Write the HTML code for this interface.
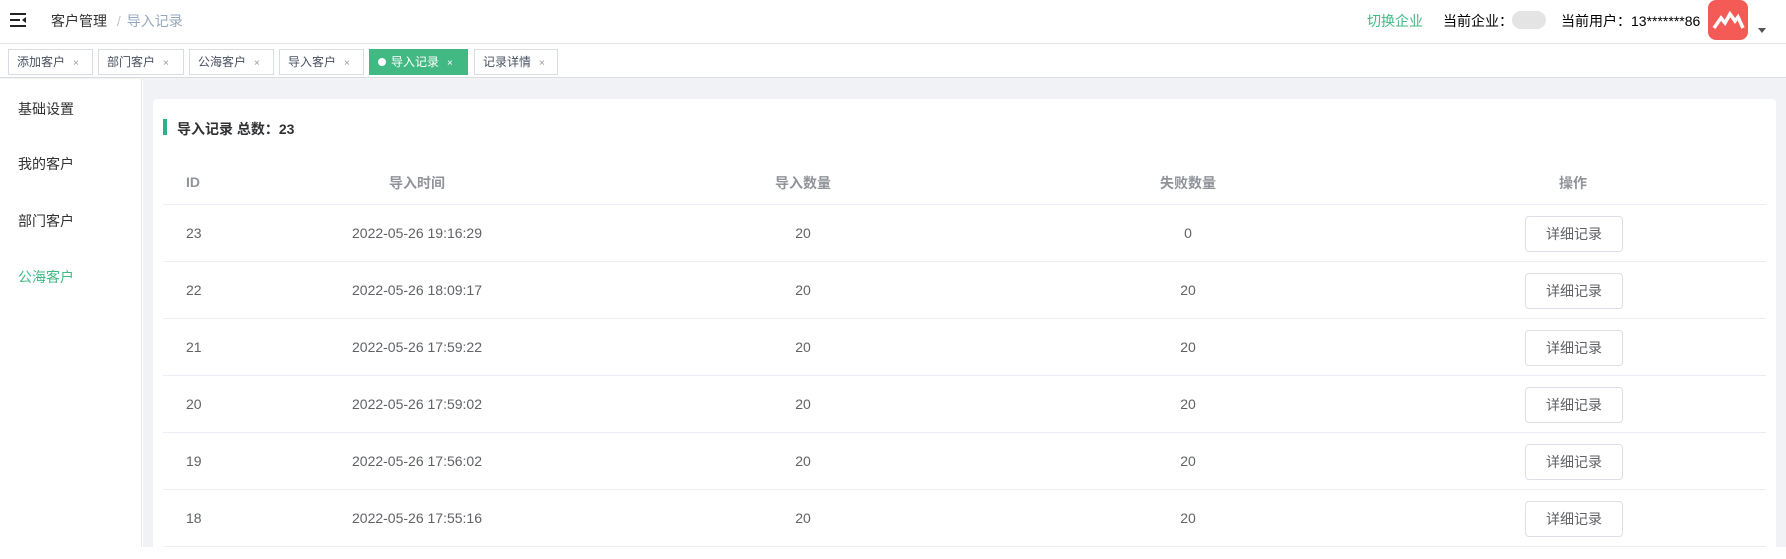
<!DOCTYPE html>
<html><head><meta charset="utf-8"><style>
*{box-sizing:border-box;margin:0;padding:0}
body{width:1786px;height:547px;overflow:hidden;background:#fff;font-family:"Liberation Sans","Noto Sans CJK SC",sans-serif;font-size:14px;color:#303133;position:relative}
.a{position:absolute;white-space:nowrap}
.tab{position:absolute;top:49px;height:26px;border:1px solid #d8dce5;font-size:12px;color:#495060;line-height:24px;padding-left:8px;background:#fff}
.tab i{font-style:normal;color:#999;font-size:10px;margin-left:8px}
.row{position:absolute;left:163px;width:1603px;height:57px;border-bottom:1px solid #ebeef5;color:#606266;font-size:14px}
.c{position:absolute;width:240px;text-align:center;line-height:57px}
.btn{position:absolute;left:1362px;top:11px;width:98px;height:36px;border:1px solid #dcdfe6;border-radius:4px;text-align:center;line-height:34px;color:#606266;background:#fff}
</style></head><body>
<div class="a" style="left:0;top:0;width:1786px;height:44px;border-bottom:1px solid #e6e6e6"></div>
<svg class="a" style="left:10px;top:13px" width="16" height="14" viewBox="0 0 16 14"><rect x="0" y="0" width="16" height="2" fill="#222"/><rect x="0" y="6" width="10" height="2" fill="#222"/><rect x="0" y="12" width="16" height="2" fill="#222"/><path d="M16 4 L12 7 L16 10Z" fill="#222"/></svg>
<div class="a" style="left:51px;top:11px;font-size:14px;color:#303133">客户管理 <span style="color:#c0c4cc;margin:0 6px">/</span><span style="color:#97a8be">导入记录</span></div>
<div class="a" style="left:1367px;top:11px;color:#42b983">切换企业</div>
<div class="a" style="left:1443px;top:11px;color:#000">当前企业：</div>
<div class="a" style="left:1512px;top:11px;width:34px;height:18px;border-radius:9px;background:#e4e4e4"></div>
<div class="a" style="left:1561px;top:11px;color:#000">当前用户：13*******86</div>
<div class="a" style="left:1708px;top:0;width:40px;height:40px;border-radius:8px;background:#f45b57"></div>
<svg class="a" style="left:1710px;top:6px" width="36" height="28" viewBox="0 0 36 28"><path d="M4 22 L11 12 L15 17 L20 8 L25 15 L28 11 L33 22" stroke="#fff" stroke-width="3.5" fill="none" stroke-linejoin="miter"/></svg>
<svg class="a" style="left:1758px;top:28px" width="8" height="5"><path d="M0 0H8L4 5Z" fill="#555"/></svg>
<div class="a" style="left:0;top:44px;width:1786px;height:34px;border-bottom:1px solid #d8dce5;box-shadow:0 1px 3px rgba(0,0,0,.08)"></div>
<div class="tab" style="left:8px;width:85px">添加客户<i>×</i></div>
<div class="tab" style="left:98px;width:86px">部门客户<i>×</i></div>
<div class="tab" style="left:189px;width:85px">公海客户<i>×</i></div>
<div class="tab" style="left:279px;width:85px">导入客户<i>×</i></div>
<div class="tab" style="left:369px;width:99px;background:#42b983;border-color:#42b983;color:#fff"><span style="display:inline-block;width:8px;height:8px;border-radius:50%;background:#fff;margin-right:5px"></span>导入记录<i style="color:#fff">×</i></div>
<div class="tab" style="left:474px;width:84px">记录详情<i>×</i></div>
<div class="a" style="left:0;top:79px;width:142px;height:468px;border-right:1px solid #e6e6e6;background:#fff"></div>
<div class="a" style="left:18px;top:99px">基础设置</div>
<div class="a" style="left:18px;top:154px">我的客户</div>
<div class="a" style="left:18px;top:211px">部门客户</div>
<div class="a" style="left:18px;top:267px;color:#42b983">公海客户</div>
<div class="a" style="left:143px;top:79px;width:1643px;height:468px;background:#f0f2f5"></div>
<div class="a" style="left:153px;top:99px;width:1623px;height:460px;background:#fff;border-radius:4px"></div>
<div class="a" style="left:163px;top:119px;width:4px;height:16px;background:#2ab38a"></div>
<div class="a" style="left:177px;top:119px;font-weight:bold;color:#303133">导入记录 总数：23</div>
<div class="row" style="top:148px;color:#909399;font-weight:bold"><div class="a" style="left:23px;top:26px">ID</div><div class="c" style="left:134px;line-height:70px">导入时间</div><div class="c" style="left:520px;line-height:70px">导入数量</div><div class="c" style="left:905px;line-height:70px">失败数量</div><div class="c" style="left:1290px;line-height:70px">操作</div></div>
<div class="row" style="top:205px"><div class="a" style="left:23px;top:20px">23</div><div class="c" style="left:134px">2022-05-26 19:16:29</div><div class="c" style="left:520px">20</div><div class="c" style="left:905px">0</div><div class="btn">详细记录</div></div>
<div class="row" style="top:262px"><div class="a" style="left:23px;top:20px">22</div><div class="c" style="left:134px">2022-05-26 18:09:17</div><div class="c" style="left:520px">20</div><div class="c" style="left:905px">20</div><div class="btn">详细记录</div></div>
<div class="row" style="top:319px"><div class="a" style="left:23px;top:20px">21</div><div class="c" style="left:134px">2022-05-26 17:59:22</div><div class="c" style="left:520px">20</div><div class="c" style="left:905px">20</div><div class="btn">详细记录</div></div>
<div class="row" style="top:376px"><div class="a" style="left:23px;top:20px">20</div><div class="c" style="left:134px">2022-05-26 17:59:02</div><div class="c" style="left:520px">20</div><div class="c" style="left:905px">20</div><div class="btn">详细记录</div></div>
<div class="row" style="top:433px"><div class="a" style="left:23px;top:20px">19</div><div class="c" style="left:134px">2022-05-26 17:56:02</div><div class="c" style="left:520px">20</div><div class="c" style="left:905px">20</div><div class="btn">详细记录</div></div>
<div class="row" style="top:490px"><div class="a" style="left:23px;top:20px">18</div><div class="c" style="left:134px">2022-05-26 17:55:16</div><div class="c" style="left:520px">20</div><div class="c" style="left:905px">20</div><div class="btn">详细记录</div></div>
</body></html>
